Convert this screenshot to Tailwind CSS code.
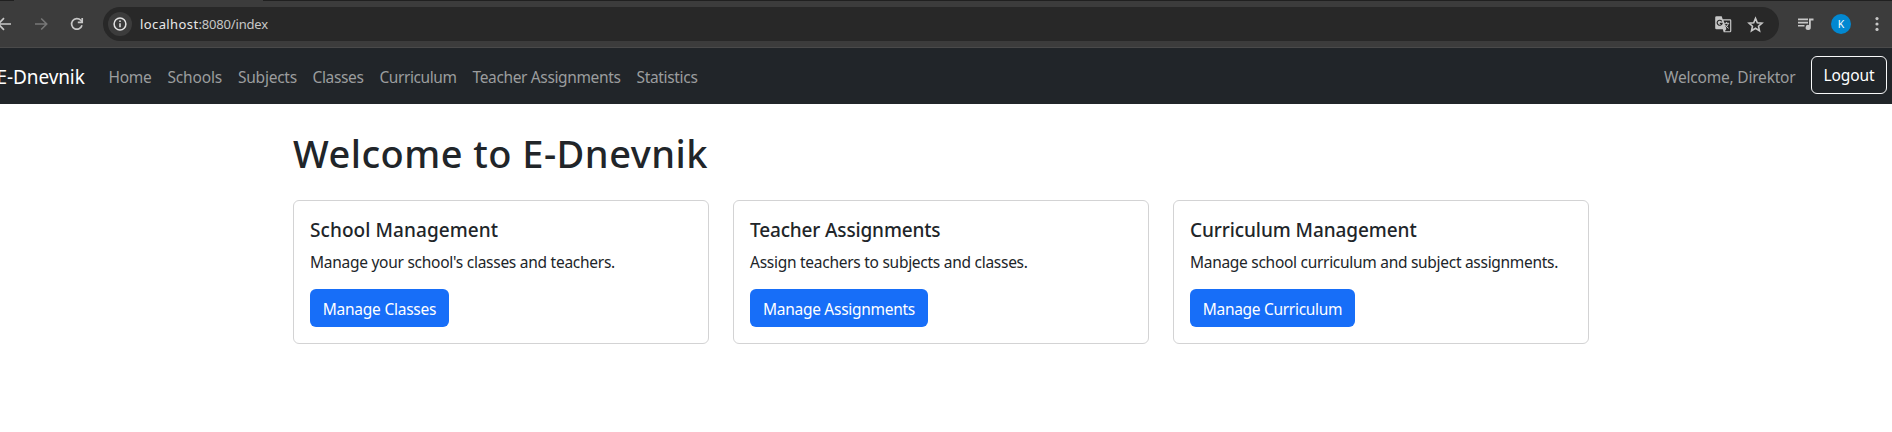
<!DOCTYPE html>
<html lang="en">
<head>
<meta charset="utf-8">
<title>E-Dnevnik</title>
<script src="https://cdn.jsdelivr.net/npm/@tailwindcss/browser@4"></script>
</head>
<body class="h-[432px] overflow-hidden bg-white font-['Noto_Sans',sans-serif] text-[15.5px] leading-[26px] text-[#212529]">

<!-- Browser toolbar -->
<div class="flex h-px bg-[#202020]"><div class="ml-[14px] w-[249px] bg-[#3c3c3c]"></div></div>
<header class="flex h-[47px] items-center border-b border-[#4a4a4a] bg-[#3c3c3c] pr-[9px] text-[#c7c7c7]">
  <svg class="-ml-[5px] size-[18px] shrink-0" viewBox="0 0 18 18" fill="none" stroke="currentColor" stroke-width="1.7"><path d="M16 9H3.5M9 3.2 3.2 9 9 14.8"/></svg>
  <svg class="ml-[19px] size-[18px] shrink-0 text-[#777]" viewBox="0 0 18 18" fill="none" stroke="currentColor" stroke-width="1.6"><path d="M3 9h11.5M9.2 3.5 14.7 9l-5.5 5.5"/></svg>
  <svg class="ml-[18px] size-[18px] shrink-0" viewBox="0 0 18 18" fill="none" stroke="currentColor" stroke-width="1.7"><path d="M14 10.3A5.3 5.3 0 1 1 12.8 5.3L14 6.6"/><path d="M14.2 3v4.3H9.8"/></svg>
  <div class="ml-[17px] flex h-[34px] w-[1676px] shrink-0 items-center rounded-full bg-[#282828] pl-[5px] pr-[15.5px]">
    <div class="flex size-6 items-center justify-center rounded-full bg-[#3c3c3c]">
      <svg class="size-[14px] text-[#e3e3e3]" viewBox="0 0 14 14" fill="none" stroke="currentColor" stroke-width="1.5"><circle cx="7" cy="7" r="5.9"/><path d="M7 6.2v4M7 3.6v1.5"/></svg>
    </div>
    <div class="ml-2 text-[13px] leading-5 text-[#c7c7c7]"><span class="tracking-[0.4px] text-[#e8e8e8]">localhost</span><span class="tracking-[-0.18px]">:8080/index</span></div>
    <svg class="ml-auto h-[17px] w-[17px]" viewBox="0 0 17 17"><path d="M1.5.3h5.2l1 3H15a1.3 1.3 0 0 1 1.3 1.3V15A1.3 1.3 0 0 1 15 16.3H8.7l-.9-3H1.5A1.3 1.3 0 0 1 .2 12V1.6A1.3 1.3 0 0 1 1.5.3z" fill="#c7c7c7"/><path d="M8.5 4.5h6.6v10.7H9.8l1.6-2.3z" fill="#282828"/><path d="M6.7 5.3A2.5 2.5 0 1 0 7.1 7.3H4.8" fill="none" stroke="#282828" stroke-width="1.2"/><path d="M9.2 7.3h5M11.6 6v1.3M13.3 7.5c-.5 2-1.7 3.3-3.2 4.3M10.2 8.6c.7 1.5 2 2.8 3.4 3.7" fill="none" stroke="#c7c7c7" stroke-width="1"/></svg>
    <svg class="ml-[15px] size-[17px]" viewBox="0 0 17 17" fill="none" stroke="currentColor" stroke-width="1.6"><path d="M8.5 2.4l1.8 4.3 4.7.4-3.5 3.1 1 4.6-4-2.5-4 2.5 1-4.6L2 7.1l4.7-.4z"/></svg>
  </div>
  <svg class="ml-[19px] h-[13px] w-[16px]" viewBox="0 0 16 13" fill="currentColor"><path d="M0 .5h10v1.7H0zM0 3.7h10v1.7H0zM0 6.9h6.5v1.7H0zM11 .5h4.5v1.9h-2.7v6.9A2.6 2.6 0 1 1 11 7z"/></svg>
  <div class="ml-[17px] flex size-5 items-center justify-center rounded-full bg-[#0288d1] text-[10.5px] leading-none text-white">K</div>
  <svg class="ml-auto h-[16px] w-3" viewBox="0 0 12 16" fill="currentColor"><circle cx="6" cy="2.6" r="1.6"/><circle cx="6" cy="8" r="1.6"/><circle cx="6" cy="13.4" r="1.6"/></svg>
</header>

<!-- Application navbar -->
<nav class="flex h-14 items-center whitespace-nowrap bg-[#212529] pr-[5px] text-[#9b9d9e]">
  <a class="-ml-[3.5px] w-[112px] shrink-0 pt-px text-[19px] leading-[30px] tracking-[-0.1px] text-white">E-Dnevnik</a>
  <div class="flex gap-4 pt-[2px]">
    <a class="w-[43px] tracking-[-0.25px]">Home</a>
    <a class="w-[54.5px] tracking-[-0.18px]">Schools</a>
    <a class="w-[58.5px] tracking-[-0.24px]">Subjects</a>
    <a class="w-[51px] tracking-[-0.36px]">Classes</a>
    <a class="w-[77px] tracking-[-0.43px]">Curriculum</a>
    <a class="w-[148px] tracking-[-0.36px]">Teacher Assignments</a>
    <a class="tracking-[-0.33px]">Statistics</a>
  </div>
  <span class="ml-auto mr-4 w-[131px] pt-[2px] tracking-[-0.2px]">Welcome, Direktor</span>
  <button class="mb-[2px] h-[38px] w-[76px] rounded-md border border-[#f8f9fa] tracking-[-0.1px] text-white">Logout</button>
</nav>

<main class="mx-[293px] pt-6">
  <h1 class="h-[48px] whitespace-nowrap text-[38px] font-medium leading-[50px] tracking-[0.46px]">Welcome to E-Dnevnik</h1>
  <div class="mt-6 grid w-[1296px] grid-cols-3 gap-6">
    <section class="h-[144px] rounded-md border border-[#d3d3d4] px-4 pt-4">
      <h5 class="mb-2 h-6 text-[19px] font-medium leading-[26px] tracking-[0.08px]">School Management</h5>
      <p class="mb-4 h-6 whitespace-nowrap tracking-[-0.265px]">Manage your school's classes and teachers.</p>
      <a class="flex h-[38px] w-[139px] items-center justify-center rounded-md bg-[#176ef8] pt-px tracking-[-0.24px] text-white">Manage Classes</a>
    </section>
    <section class="h-[144px] rounded-md border border-[#d3d3d4] px-4 pt-4">
      <h5 class="mb-2 h-6 text-[19px] font-medium leading-[26px] tracking-[-0.15px]">Teacher Assignments</h5>
      <p class="mb-4 h-6 whitespace-nowrap tracking-[-0.27px]">Assign teachers to subjects and classes.</p>
      <a class="flex h-[38px] w-[178px] items-center justify-center rounded-md bg-[#176ef8] pt-px tracking-[-0.28px] text-white">Manage Assignments</a>
    </section>
    <section class="h-[144px] rounded-md border border-[#d3d3d4] px-4 pt-4">
      <h5 class="mb-2 h-6 text-[19px] font-medium leading-[26px] tracking-[-0.08px]">Curriculum Management</h5>
      <p class="mb-4 h-6 whitespace-nowrap tracking-[-0.29px]">Manage school curriculum and subject assignments.</p>
      <a class="flex h-[38px] w-[165px] items-center justify-center rounded-md bg-[#176ef8] pt-px tracking-[-0.3px] text-white">Manage Curriculum</a>
    </section>
  </div>
</main>
</body>
</html>
